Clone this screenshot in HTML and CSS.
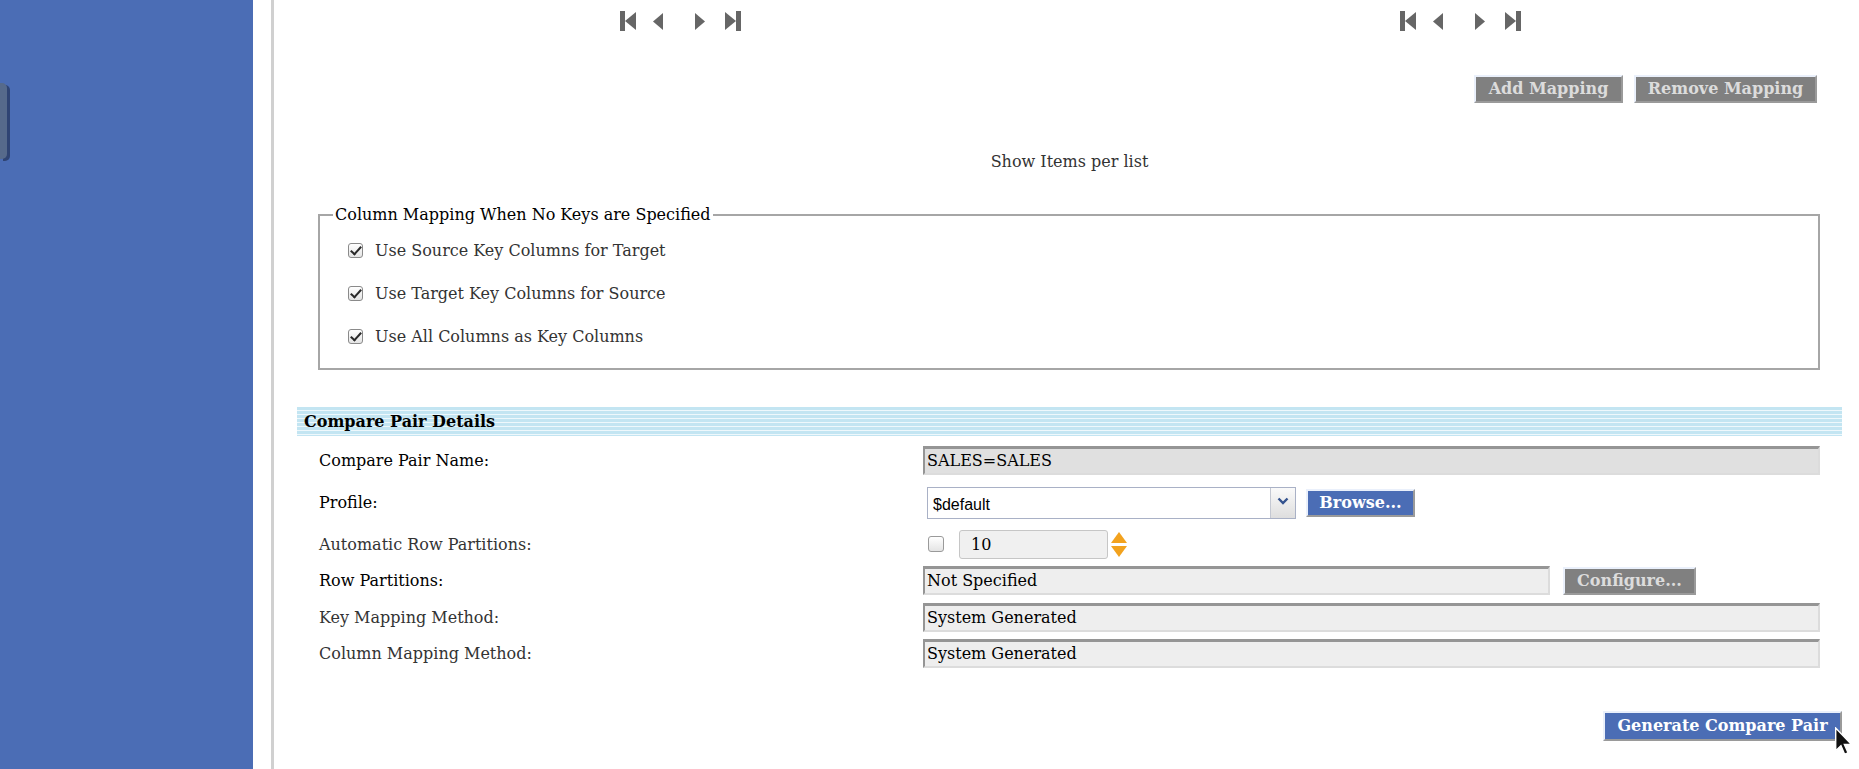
FILE: index.html
```html
<!DOCTYPE html>
<html lang="en">
<head>
<meta charset="utf-8">
<title>Compare Pair</title>
<link rel="stylesheet" href="styles.css">
</head>
<body>
<aside class="sidebar"><div class="sidebar-tab"></div></aside>
<div class="rule"></div>
<main class="content">
  <div class="pagers">
    <div class="pager">
      <svg width="121" height="21" viewBox="0 0 121 21"><rect x="0" y="0" width="5" height="20" fill="#666"/><polygon points="5,10 16,1 16,19" fill="#666"/><polygon points="33,10.5 43,2 43,19" fill="#666"/><polygon points="75,2 85,10.5 75,19" fill="#666"/><polygon points="105,1 116,10 105,19" fill="#666"/><rect x="116" y="0" width="5" height="20" fill="#666"/></svg>
    </div>
    <div class="pager">
      <svg width="121" height="21" viewBox="0 0 121 21"><rect x="0" y="0" width="5" height="20" fill="#666"/><polygon points="5,10 16,1 16,19" fill="#666"/><polygon points="33,10.5 43,2 43,19" fill="#666"/><polygon points="75,2 85,10.5 75,19" fill="#666"/><polygon points="105,1 116,10 105,19" fill="#666"/><rect x="116" y="0" width="5" height="20" fill="#666"/></svg>
    </div>
  </div>

  <div class="map-actions">
    <button class="btn btn-gray btn-add">Add Mapping</button>
    <button class="btn btn-gray btn-remove">Remove Mapping</button>
  </div>

  <div class="items-per-list">Show Items per list</div>

  <fieldset class="mapping-box">
    <legend>Column Mapping When No Keys are Specified</legend>
    <label class="check-row"><input type="checkbox" class="check" checked> Use Source Key Columns for Target</label>
    <label class="check-row"><input type="checkbox" class="check" checked> Use Target Key Columns for Source</label>
    <label class="check-row"><input type="checkbox" class="check" checked> Use All Columns as Key Columns</label>
  </fieldset>

  <div class="section-head">Compare Pair Details</div>

  <div class="form-grid">
    <div class="label">Compare Pair Name:</div>
    <div class="value"><div class="field field-dark field-full">SALES=SALES</div></div>

    <div class="label">Profile:</div>
    <div class="value">
      <div class="select"><span class="select-text">$default</span><span class="select-btn"><svg width="12" height="8" viewBox="0 0 12 8"><polyline points="1.5,1.5 6,6 10.5,1.5" fill="none" stroke="#34538f" stroke-width="2.4"/></svg></span></div>
      <button class="btn btn-blue btn-browse">Browse...</button>
    </div>

    <div class="label label-soft">Automatic Row Partitions:</div>
    <div class="value">
      <input type="checkbox" class="check check-plain">
      <div class="number">10</div>
      <div class="spinner"><span class="spin-up"></span><span class="spin-down"></span></div>
    </div>

    <div class="label">Row Partitions:</div>
    <div class="value">
      <div class="field field-part">Not Specified</div>
      <button class="btn btn-gray btn-config">Configure...</button>
    </div>

    <div class="label label-soft">Key Mapping Method:</div>
    <div class="value"><div class="field field-full">System Generated</div></div>

    <div class="label label-soft">Column Mapping Method:</div>
    <div class="value"><div class="field field-full">System Generated</div></div>
  </div>

  <div class="generate-row">
    <button class="btn btn-blue btn-generate">Generate Compare Pair</button>
  </div>
</main>
<svg class="cursor" width="17" height="29" viewBox="0 0 12 20"><path d="M0.5,0.5 L0.5,16.5 L4.2,12.9 L6.8,19 L9.2,18 L6.6,12 L11.5,12 Z" fill="#111" stroke="#fff" stroke-width="1"/></svg>
</body>
</html>
```

FILE: styles.css
```css
* { box-sizing: border-box; }

html, body {
  margin: 0;
  padding: 0;
  height: 100%;
}

body {
  position: relative;
  display: flex;
  width: 1859px;
  height: 769px;
  overflow: hidden;
  font-family: "DejaVu Serif", serif;
  font-size: 16px;
  color: #000;
  background: #fff;
}

.sidebar {
  width: 253px;
  flex: none;
  background: #4b6db5;
  padding-top: 83px;
}

.sidebar-tab {
  width: 7px;
  height: 76px;
  background: #566a8b;
  border-radius: 0 5px 5px 0;
  box-shadow: 3px 2px 0 #2f4473;
}

.rule {
  width: 3px;
  flex: none;
  margin-left: 18px;
  background: #d0d0d0;
}

.content {
  flex: 1;
  padding: 0 17px 0 23px;
}

/* pagers */
.pagers {
  display: grid;
  grid-template-columns: 1fr 1fr;
  margin: 0 -8px 0 -7px;
  padding-top: 11px;
}

.pager {
  display: flex;
  justify-content: center;
  height: 21px;
}

/* buttons */
.btn {
  font-family: "DejaVu Serif", serif;
  font-weight: bold;
  font-size: 16px;
  height: 28px;
  padding: 0;
  text-align: center;
  border: 2px solid;
  border-color: #eaf0fb #9a9a9a #9a9a9a #eaf0fb;
  line-height: 22px;
}

.btn-gray {
  background: #808080;
  color: #dcdcdc;
}

.btn-blue {
  background: #4b6db5;
  color: #fff;
}

.map-actions {
  display: flex;
  justify-content: flex-end;
  gap: 11px;
  padding-right: 25px;
  margin-top: 43px;
}

.btn-add { width: 149px; }
.btn-remove { width: 183px; }

.items-per-list {
  margin-top: 49px;
  line-height: 20px;
  text-align: center;
  color: #333;
}

/* fieldset */
.mapping-box {
  margin: 33px 22px 0 21px;
  padding: 4px 0 10px 13px;
  border: 2px solid #a6a6a6;
}

.mapping-box legend {
  padding: 0 2px;
  line-height: 20px;
}

.check-row {
  display: flex;
  align-items: center;
  height: 43px;
  padding-left: 15px;
  color: #333;
}

.check {
  appearance: none;
  -webkit-appearance: none;
  position: relative;
  width: 15px;
  height: 15px;
  margin: 0 12px 0 0;
  border: 1px solid #8a8a8a;
  border-radius: 3px;
  background: linear-gradient(#ffffff, #e4e4e4);
  flex: none;
}

.check:checked::after {
  content: "";
  position: absolute;
  left: 4px;
  top: 0px;
  width: 4px;
  height: 9px;
  border: solid #2a2a2a;
  border-width: 0 2.5px 2.5px 0;
  transform: rotate(42deg);
}

/* section header */
.section-head {
  margin-top: 37px;
  height: 29px;
  line-height: 29px;
  padding-left: 7px;
  font-weight: bold;
  background: repeating-linear-gradient(to bottom, #c3e5f2 0, #c3e5f2 3px, #eef8fc 3px, #eef8fc 4px);
}

/* form */
.form-grid {
  display: grid;
  grid-template-columns: 604px 1fr;
  grid-template-rows: 36px 49px 34px 39px 35px 37px;
  margin-top: 6px;
  padding: 0 22px;
}

.label {
  display: flex;
  align-items: center;
}

.label-soft { color: #333; }

.value {
  display: flex;
  align-items: center;
}

.field {
  height: 29px;
  line-height: 24px;
  padding-left: 2px;
  background: #eeeeee;
  border: solid;
  border-width: 3px 2px 2px 2px;
  border-color: #959595 #dcdcdc #dcdcdc #959595;
  white-space: nowrap;
}

.field-dark { background: #e0e0e0; }
.field-full { width: 100%; }
.field-part { width: 627px; }

.select {
  display: flex;
  width: 369px;
  height: 32px;
  margin-left: 4px;
  border: 1px solid #a9b1c6;
  background: #fff;
}

.select-text {
  flex: 1;
  padding-left: 5px;
  font-family: "Liberation Sans", Arial, sans-serif;
  font-size: 16px;
  line-height: 34px;
}

.select-btn {
  width: 25px;
  display: flex;
  justify-content: center;
  padding-top: 9px;
  border-left: 1px solid #c4c8d2;
  background: linear-gradient(#fafafa, #dedede);
}

.btn-browse {
  width: 109px;
  margin-left: 10px;
}

.check-plain {
  width: 16px;
  height: 16px;
  margin-left: 5px;
  margin-right: 15px;
  border-color: #9a9a9a;
}

.number {
  width: 149px;
  height: 29px;
  line-height: 27px;
  padding-left: 11px;
  background: #f0f0f0;
  border: 1px solid #c6c6c6;
  border-radius: 3px;
}

.spinner {
  display: flex;
  flex-direction: column;
  gap: 3px;
  margin-left: 3px;
}

.spin-up, .spin-down {
  width: 0;
  height: 0;
  border-left: 8.5px solid transparent;
  border-right: 8.5px solid transparent;
}

.spin-up { border-bottom: 11px solid #f2a21e; }
.spin-down { border-top: 11px solid #f2a21e; }

.btn-config {
  width: 133px;
  margin-left: 13px;
}

.generate-row {
  display: flex;
  justify-content: flex-end;
  margin-top: 39px;
}

.btn-generate {
  width: 239px;
  height: 30px;
  line-height: 24px;
}

.cursor {
  position: absolute;
  left: 1835px;
  top: 727px;
}
```
